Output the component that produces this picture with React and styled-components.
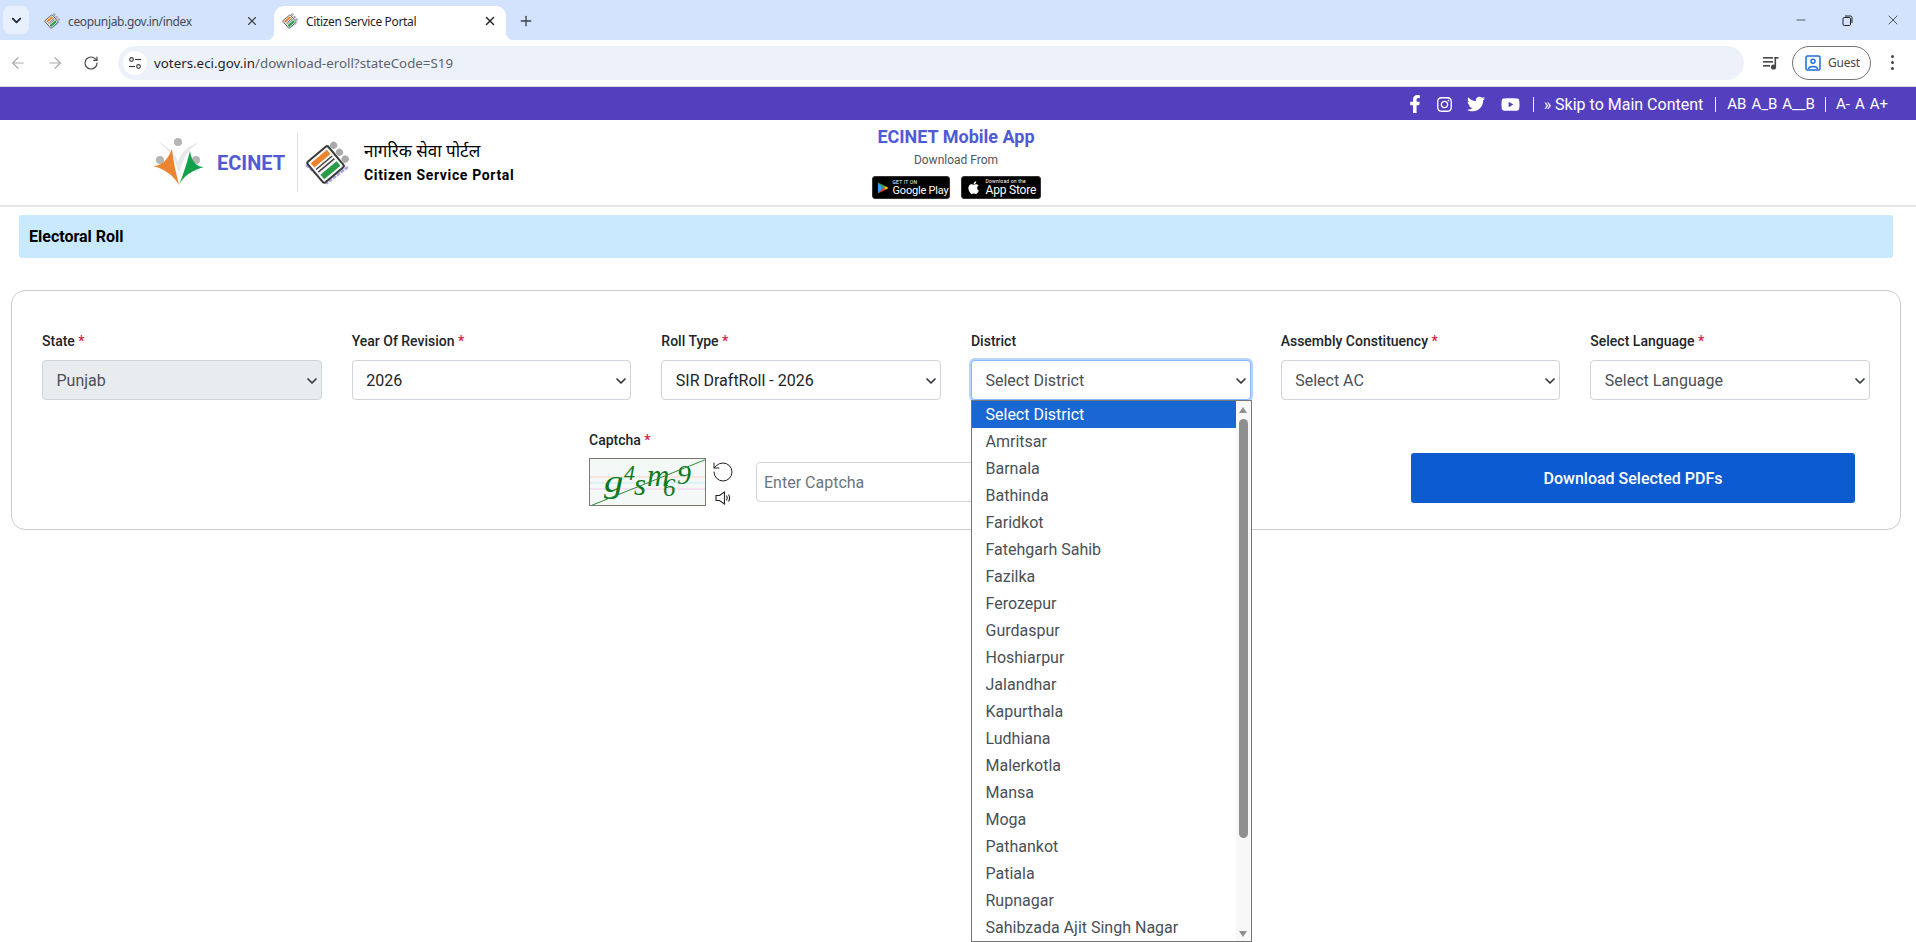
import React from 'react';
import styled, { createGlobalStyle } from 'styled-components';
import { FaFacebookF, FaInstagram, FaTwitter, FaYoutube } from 'react-icons/fa';
import { ArrowLeft, ArrowRight, RotateCw, X, Plus, Minus, ChevronDown, RotateCcw } from 'lucide-react';

const Global = createGlobalStyle`
  html, body { margin: 0; padding: 0; background: #fff; overflow: hidden; }
  body { font-family: Roboto, "Liberation Sans", sans-serif; }
  * { box-sizing: border-box; }
`;

const Page = styled.div`
  width: 1916px; height: 942px; overflow: hidden; display: flex; flex-direction: column; position: relative;
`;

/* browser chrome */
const TabStrip = styled.div`
  height: 40px; background: #d3e3fd; display: flex; align-items: flex-end; padding-left: 3px;
`;
const TabMenu = styled.div`
  width: 26px; height: 28px; margin: 0 0 6px 0; border-radius: 8px; background: #e8f0fe;
  display: flex; align-items: center; justify-content: center; color: #1f2a44;
`;
const Tab = styled.div`
  position: relative;
  width: ${p => p.$active ? '232px' : '241px'}; height: 34px; display: flex; align-items: center; gap: 8px;
  padding: 0 ${p => p.$active ? '9px' : '15px'} 4px ${p => p.$active ? '8px' : '11px'};
  border-radius: 10px 10px 0 0;
  background: ${p => p.$active ? '#fff' : 'transparent'};
  color: ${p => p.$active ? '#1f1f1f' : '#444a55'};
  font: 12px "Noto Sans", sans-serif; letter-spacing: -0.35px;
  margin-left: ${p => p.$active ? '0' : '4px'};
  ${p => p.$active ? `
    &::before, &::after { content: ''; position: absolute; bottom: 0; width: 8px; height: 8px; }
    &::before { left: -8px; background: radial-gradient(circle at 0 0, #d3e3fd 8px, #fff 8.5px); }
    &::after { right: -8px; background: radial-gradient(circle at 100% 0, #d3e3fd 8px, #fff 8.5px); }
  ` : ''}
`;
const TabTitle = styled.span` flex: 1; white-space: nowrap; `;
const NewTab = styled.div`
  width: 34px; height: 34px; display: flex; align-items: center; justify-content: center; color: #3c4043; margin-left: 3px; padding-bottom: 5px;
`;
const Spacer = styled.div` flex: 1; `;
const WindowButtons = styled.div`
  display: flex; align-self: flex-start; height: 40px; color: #1f1f1f;
`;
const WinButton = styled.div`
  width: 46px; height: 40px; display: flex; align-items: center; justify-content: center;
`;
const Toolbar = styled.div`
  height: 47px; background: #fff; display: flex; align-items: center; padding: 0 0 1px 0; border-bottom: 1px solid #d9d9d9;
`;
const NavGroup = styled.div`
  width: 118px; display: flex; align-items: center; padding-left: 9px; gap: 19px; flex: none;
`;
const NavIcon = styled.span`
  display: flex; color: ${p => p.$on ? '#474747' : '#a8abaf'};
`;
const Omnibox = styled.div`
  width: 1626px; height: 34px; border-radius: 17px; background: #edf2fa; display: flex; align-items: center; padding-left: 5px; flex: none;
  font: 13.33px "Noto Sans", sans-serif; color: #5f6368;
`;
const TuneBadge = styled.span`
  width: 24px; height: 24px; border-radius: 50%; background: #fff; display: flex; align-items: center; justify-content: center; margin-right: 7px;
`;
const Host = styled.span` color: #1f1f1f; `;
const ToolRight = styled.div`
  flex: 1; display: flex; align-items: center; padding-left: 19px; color: #474747;
`;
const GuestChip = styled.div`
  margin-left: 13px; width: 79px; height: 34px; border: 1px solid #747775; border-radius: 17px; display: flex; align-items: center; padding-left: 12px; gap: 7px;
  font: 12px "Noto Sans", sans-serif; letter-spacing: -0.2px; color: #474747; flex: none;
`;
const Dots = styled.div`
  margin-left: 20px; display: flex; flex-direction: column; gap: 3px;
  & > i { width: 3px; height: 3px; border-radius: 50%; background: #474747; display: block; }
`;

/* site */
const TopBar = styled.div`
  height: 33px; background: #5440be; color: #fff; display: flex; align-items: center; justify-content: flex-end; padding: 1px 28px 0 0; font-size: 16px;
`;
const Social = styled.a`
  display: flex; margin-right: ${p => p.$gap}px; font-size: ${p => p.$size}px; color: #fff;
`;
const Sep = styled.span`
  width: 1px; height: 15px; background: #f0eefa; margin: 0 ${p => p.$r || 10}px 0 ${p => p.$l || 10}px;
`;
const SizeLinks = styled.span`
  display: flex; gap: 5px; font-size: 15px;
`;
const Header = styled.header`
  height: 87px; border-bottom: 2px solid #e6e6f0; display: flex; background: #fff;
`;
const Brand = styled.div`
  width: 846px; display: flex; align-items: center; padding: 0 0 0 153px; flex: none;
`;
const BrandName = styled.div`
  color: #4f5bd5; font-weight: 700; font-size: 20px; margin-left: 12px; width: 68px;
`;
const Divider = styled.div` width: 1px; height: 58px; background: #ddd; margin: 0 7px 0 12px; `;
const PortalText = styled.div`
  margin-left: 15px; color: #000; display: flex; flex-direction: column; gap: 3px;
`;
const Hindi = styled.div` font-size: 17px; font-weight: 400; line-height: 22px; margin-top: -1px; font-family: "Noto Sans Devanagari", "Lohit Devanagari", Roboto, sans-serif; `;
const English = styled.div` font-size: 14px; font-weight: 700; letter-spacing: 0.65px; line-height: 16px; `;
const AppBlock = styled.div`
  width: 220px; display: flex; flex-direction: column; align-items: center; padding-top: 6px; color: #4f5bd5;
`;
const AppTitle = styled.div` font-weight: 700; font-size: 18px; line-height: 21px; `;
const AppSub = styled.div` font-size: 12px; color: #555; line-height: 16px; margin-top: 5px; `;
const Badges = styled.div` display: flex; gap: 11px; margin-top: 8px; `;
const Badge = styled.div`
  width: ${p => p.$w}px; height: 23px; background: #000; border-radius: 3px; border: 1px solid #333; color: #fff; display: flex; align-items: center; padding-left: ${p => p.$pl}px; gap: ${p => p.$g}px;
`;
const BadgeText = styled.div`
  display: flex; flex-direction: column; line-height: 1;
  small { font-size: 5px; letter-spacing: .2px; }
  b { font-size: ${p => p.$s}px; font-weight: 400; letter-spacing: -0.2px; white-space: nowrap; }
`;

const TitleBar = styled.div`
  margin: 8px 23px 0 19px; height: 43px; background: #c9e9ff; border-radius: 3px; display: flex; align-items: center; padding-left: 10px;
  font-weight: 700; font-size: 16px; color: #000;
`;
const Card = styled.section`
  margin: 32px 15px 0 11px; height: 240px; border: 1px solid #ccc; border-radius: 14px; padding: 40px 30px 0;
`;
const FieldRow = styled.div`
  display: grid; grid-template-columns: repeat(6, 1fr); column-gap: 30px;
`;
const Label = styled.label`
  display: block; font-size: 14px; font-weight: 500; line-height: 20px; color: #212529; height: 29px;
  em { color: #d3213c; font-style: normal; }
`;
const SelectBox = styled.div`
  position: relative; height: 40px; border: 1px solid ${p => p.$focus ? '#86b7fe' : '#ced4da'}; border-radius: 4px;
  background: ${p => p.$disabled ? '#e9ecef' : '#fff'}; color: ${p => p.$dark ? '#212529' : '#495057'};
  font-size: 16px; display: flex; align-items: center; padding-left: 13.5px;
  box-shadow: ${p => p.$focus ? '0 0 0 2px #b6d4fe' : 'none'};
  svg { position: absolute; right: 1px; top: 12px; color: #343a40; }
`;
const CaptchaRow = styled.div`
  display: flex; margin-top: 30px;
`;
const CaptchaBlock = styled.div`
  margin-left: 547px; width: 470px; flex: none;
`;
const CaptchaLine = styled.div` display: flex; align-items: center; margin-top: -1px; `;
const CaptchaImage = styled.div`
  position: relative; width: 117px; height: 48px; border: 1px solid #7a7a72; background: #f4f8f6; overflow: hidden; flex: none;
`;
const CaptchaArt = styled.svg` position: absolute; inset: 0; `;
const Glyph = styled.span`
  position: absolute; left: ${p => p.$x}px; top: ${p => p.$y}px; font: italic ${p => p.$s}px "Liberation Serif", serif; color: #0c7a1e; line-height: 1;
  transform: scaleX(${p => p.$sx || 1}); transform-origin: left center;
`;
const CaptchaTools = styled.div`
  display: flex; flex-direction: column; align-items: center; gap: 7px; margin-left: 5px; width: 24px; color: #222;
`;
const CaptchaInput = styled.div`
  margin-left: 21px; height: 40px; width: 230px; border: 1px solid #ced4da; border-radius: 4px; display: flex; align-items: center; padding-left: 7px; color: #6c757d; font-size: 16px;
`;
const DownloadButton = styled.button`
  margin: 23px 0 0 352px; width: 444px; height: 50px; background: #0d5bd0; color: #fff; border: 0; border-radius: 3px; font: 500 16px Roboto, sans-serif;
`;

const Dropdown = styled.div`
  position: absolute; left: 971px; top: 400px; width: 281px; height: 542px; background: #fff; border: 1px solid #767676;
  display: flex; overflow: hidden;
`;
const OptionList = styled.div` flex: 1; `;
const Option = styled.div`
  height: 27px; padding-left: 13.5px; display: flex; align-items: center; font-size: 16px; white-space: nowrap;
  background: ${p => p.$on ? '#1967d2' : 'transparent'}; color: ${p => p.$on ? '#fff' : '#495057'};
`;
const ScrollTrack = styled.div`
  width: 15px; background: #f8f8f8; position: relative; flex: none;
`;
const ScrollThumb = styled.div`
  position: absolute; left: 3px; right: 3px; top: 18px; height: 419px; background: #8f8f8f; border-radius: 5px;
`;
const Arrow = styled.i`
  position: absolute; left: 3px; width: 0; height: 0; border-left: 4.5px solid transparent; border-right: 4.5px solid transparent;
  ${p => p.$up ? 'top: 6px; border-bottom: 6px solid #8f8f8f;' : 'bottom: 4px; border-top: 6px solid #8f8f8f;'}
`;

const Evm = ({ size = 16 }) => (
  <svg width={size} height={size} viewBox="0 0 44 44">
    <path d="M1 24 L22 42 L43 26" fill="none" stroke="#a5a7e6" strokeWidth="2.5" strokeDasharray="4 1" />
    <g transform="rotate(-40 20 22)">
      <rect x="6" y="10" width="27" height="27" rx="2" fill="#f7f7f7" stroke="#3a3a3a" strokeWidth="2" />
      <rect x="9" y="13" width="21" height="5.5" fill="#ea8430" />
      <rect x="9" y="20.5" width="21" height="1.5" fill="#444" />
      <rect x="9" y="24" width="21" height="1.5" fill="#444" />
      <rect x="9" y="28" width="21" height="6" fill="#2a9b49" />
      <circle cx="38" cy="14" r="3.6" fill="#aaa" />
      <circle cx="38" cy="23" r="3.6" fill="#aaa" />
      <circle cx="38" cy="32" r="3.6" fill="#aaa" />
    </g>
  </svg>
);

const EcinetLogo = () => (
  <svg width="52" height="52" viewBox="0 0 52 52">
    <path d="M5 5 C14 9 22 15 25 25 C27 15 36 9 46 5 C37 11 30 20 27 34 L25 34 C22 20 14 11 5 5 Z" fill="#e8e8e8" />
    <circle cx="25" cy="5" r="4" fill="#b5b5b5" />
    <circle cx="7" cy="23" r="4" fill="#b5b5b5" />
    <circle cx="43" cy="23" r="4" fill="#b5b5b5" />
    <path d="M0 29 C7 29 14 25 19 12 C20 24 23 36 26 48 C21 39 12 32 0 29 Z" fill="#ea8430" />
    <path d="M51 30 C44 30 39 26 37 14 C34 26 30 38 26 48 C31 38 40 33 51 30 Z" fill="#12a04d" />
  </svg>
);

const Tune = () => (
  <svg width="14" height="14" viewBox="0 0 14 14" fill="none" stroke="#3c4043" strokeWidth="1.2">
    <circle cx="3.5" cy="3.5" r="1.8" /><path d="M7 3.5h6" />
    <circle cx="10.5" cy="10.5" r="1.8" /><path d="M1 10.5h6" />
  </svg>
);
const MediaIcon = () => (
  <svg width="16" height="14" viewBox="0 0 16 14" fill="#474747">
    <rect x="0" y="1" width="10" height="1.6" /><rect x="0" y="5" width="10" height="1.6" /><rect x="0" y="9" width="7" height="1.6" />
    <rect x="11.5" y="1" width="1.6" height="10" /><rect x="11.5" y="1" width="4" height="1.6" />
    <circle cx="10.5" cy="11" r="2.6" />
  </svg>
);
const GuestIcon = () => (
  <svg width="16" height="16" viewBox="0 0 16 16" fill="none" stroke="#1a6fd8" strokeWidth="1.5">
    <rect x="1" y="1" width="14" height="14" rx="1.5" />
    <circle cx="8" cy="6.2" r="2" />
    <path d="M3.5 14 C4 10.8 12 10.8 12.5 14" />
  </svg>
);
const RestoreIcon = () => (
  <svg width="11" height="11" viewBox="0 0 11 11" fill="none" stroke="#1f1f1f" strokeWidth="1">
    <rect x="1" y="2.5" width="7.5" height="8" rx="1.2" />
    <path d="M3 1h5.5A1.5 1.5 0 0 1 10 2.5V8" />
  </svg>
);
const SpeakerIcon = () => (
  <svg width="16" height="14" viewBox="0 0 16 14" fill="none" stroke="#222" strokeWidth="1.1">
    <path d="M1 4.5h3.500L9.500 1v12L4.500 9.500H1z" />
    <path d="M11.500 4.500c1 1.500 1 3.500 0 5" />
    <path d="M13.500 3.500c1.300 2 1.300 5 0 7" />
  </svg>
);
const PlayLogo = () => (
  <svg width="13" height="14" viewBox="0 0 13 14">
    <path d="M1 1 L7 7 L1 13 Z" fill="#3b9cf2" />
    <path d="M1 1 L9.5 5 L7 7 Z" fill="#34a853" />
    <path d="M1 13 L9.5 9 L7 7 Z" fill="#ea4335" />
    <path d="M9.5 5 L12.5 7 L9.5 9 L7 7 Z" fill="#fbbc04" />
  </svg>
);
const AppleLogo = () => (
  <svg width="13" height="15" viewBox="0 0 24 28" fill="#fff">
    <path d="M17 14.800c0-3 2.500-4.400 2.600-4.500-1.400-2.100-3.600-2.400-4.400-2.400-1.900-.2-3.700 1.100-4.600 1.100-1 0-2.500-1.100-4-1C4.500 8 2.600 9.100 1.600 11c-2.100 3.600-.5 9 1.500 12 1 1.400 2.200 3.100 3.800 3 1.500-.1 2.100-1 3.900-1 1.800 0 2.400 1 4 .9 1.700 0 2.700-1.500 3.700-2.900 1.200-1.700 1.600-3.300 1.700-3.400-.1 0-3.200-1.200-3.200-4.800zM14 6c.8-1 1.400-2.400 1.200-3.800-1.200.1-2.700.8-3.500 1.800-.8.900-1.500 2.300-1.300 3.700 1.400.1 2.700-.7 3.600-1.700z" />
  </svg>
);

const fields = [
  { label: 'State', req: true, value: 'Punjab', disabled: true },
  { label: 'Year Of Revision', req: true, value: '2026', dark: true },
  { label: 'Roll Type', req: true, value: 'SIR DraftRoll - 2026', dark: true },
  { label: 'District', value: 'Select District', focus: true },
  { label: 'Assembly Constituency', req: true, value: 'Select AC' },
  { label: 'Select Language', req: true, value: 'Select Language' },
];
const districts = ['Select District', 'Amritsar', 'Barnala', 'Bathinda', 'Faridkot', 'Fatehgarh Sahib', 'Fazilka', 'Ferozepur', 'Gurdaspur', 'Hoshiarpur', 'Jalandhar', 'Kapurthala', 'Ludhiana', 'Malerkotla', 'Mansa', 'Moga', 'Pathankot', 'Patiala', 'Rupnagar', 'Sahibzada Ajit Singh Nagar'];

export default function App() {
  return (
    <Page>
      <Global />
      <TabStrip>
        <TabMenu><ChevronDown size={15} strokeWidth={3} /></TabMenu>
        <Tab>
          <Evm />
          <TabTitle>ceopunjab.gov.in/index</TabTitle>
          <X size={14} color="#444" />
        </Tab>
        <Tab $active>
          <Evm />
          <TabTitle>Citizen Service Portal</TabTitle>
          <X size={14} color="#222" strokeWidth={2.4} />
        </Tab>
        <NewTab><Plus size={16} /></NewTab>
        <Spacer />
        <WindowButtons>
          <WinButton><Minus size={14} strokeWidth={1.2} /></WinButton>
          <WinButton><RestoreIcon /></WinButton>
          <WinButton><X size={16} strokeWidth={1.1} /></WinButton>
        </WindowButtons>
      </TabStrip>
      <Toolbar>
        <NavGroup>
          <NavIcon><ArrowLeft size={18} strokeWidth={1.6} /></NavIcon>
          <NavIcon><ArrowRight size={18} strokeWidth={1.6} /></NavIcon>
          <NavIcon $on><RotateCw size={16} strokeWidth={1.8} /></NavIcon>
        </NavGroup>
        <Omnibox>
          <TuneBadge><Tune /></TuneBadge>
          <span><Host>voters.eci.gov.in</Host>/download-eroll?stateCode=S19</span>
        </Omnibox>
        <ToolRight>
          <MediaIcon />
          <GuestChip><GuestIcon />Guest</GuestChip>
          <Dots><i /><i /><i /></Dots>
        </ToolRight>
      </Toolbar>

      <TopBar>
        <Social $gap={12} $size={18}><FaFacebookF /></Social>
        <Social $gap={14} $size={17}><FaInstagram /></Social>
        <Social $gap={16} $size={18}><FaTwitter /></Social>
        <Social $gap={0} $size={19}><FaYoutube /></Social>
        <Sep $l={13} $r={10} />
        <span>» Skip to Main Content</span>
        <Sep $l={12} $r={11} />
        <SizeLinks><span>AB</span><span>A_B</span><span>A__B</span></SizeLinks>
        <Sep $l={10} $r={10} />
        <SizeLinks><span>A-</span><span>A</span><span>A+</span></SizeLinks>
      </TopBar>

      <Header>
        <Brand>
          <EcinetLogo />
          <BrandName>ECINET</BrandName>
          <Divider />
          <Evm size={44} />
          <PortalText>
            <Hindi>नागरिक सेवा पोर्टल</Hindi>
            <English>Citizen Service Portal</English>
          </PortalText>
        </Brand>
        <AppBlock>
          <AppTitle>ECINET Mobile App</AppTitle>
          <AppSub>Download From</AppSub>
          <Badges>
            <Badge $w={78} $pl={4} $g={4}>
              <PlayLogo />
              <BadgeText $s={11}><small>GET IT ON</small><b>Google Play</b></BadgeText>
            </Badge>
            <Badge $w={80} $pl={6} $g={5}>
              <AppleLogo />
              <BadgeText $s={12}><small>Download on the</small><b>App Store</b></BadgeText>
            </Badge>
          </Badges>
        </AppBlock>
      </Header>

      <TitleBar>Electoral Roll</TitleBar>

      <Card>
        <FieldRow>
          {fields.map(f => (
            <div key={f.label}>
              <Label>{f.label}{f.req && <em> *</em>}</Label>
              <SelectBox $disabled={f.disabled} $focus={f.focus} $dark={f.dark}>
                {f.value}
                <ChevronDown size={16} strokeWidth={2.6} />
              </SelectBox>
            </div>
          ))}
        </FieldRow>
        <CaptchaRow>
          <CaptchaBlock>
            <Label>Captcha <em>*</em></Label>
            <CaptchaLine>
              <CaptchaImage>
                <CaptchaArt width="117" height="48" viewBox="0 0 117 48">
                  <line x1="0" y1="18" x2="117" y2="18" stroke="#f8d5cf" />
                  <line x1="0" y1="24" x2="117" y2="24" stroke="#bfeef5" />
                  <line x1="0" y1="30" x2="117" y2="30" stroke="#f8c8f0" />
                </CaptchaArt>
                <Glyph $x={14} $y={7} $s={31} $sx={1.25}>g</Glyph>
                <Glyph $x={34} $y={3} $s={22}>4</Glyph>
                <Glyph $x={44} $y={10} $s={31}>s</Glyph>
                <Glyph $x={57} $y={1} $s={31}>m</Glyph>
                <Glyph $x={73} $y={16} $s={25}>6</Glyph>
                <Glyph $x={87} $y={2} $s={28}>9</Glyph>
                <CaptchaArt width="117" height="48" viewBox="0 0 117 48">
                  <line x1="0" y1="47" x2="117" y2="0" stroke="#2e8b3c" />
                </CaptchaArt>
              </CaptchaImage>
              <CaptchaTools>
                <RotateCcw size={24} strokeWidth={1} />
                <SpeakerIcon />
              </CaptchaTools>
              <CaptchaInput>Enter Captcha</CaptchaInput>
            </CaptchaLine>
          </CaptchaBlock>
          <DownloadButton>Download Selected PDFs</DownloadButton>
        </CaptchaRow>
      </Card>

      <Dropdown>
        <OptionList>
          {districts.map((d, i) => <Option key={d} $on={i === 0}>{d}</Option>)}
        </OptionList>
        <ScrollTrack>
          <Arrow $up />
          <ScrollThumb />
          <Arrow />
        </ScrollTrack>
      </Dropdown>
    </Page>
  );
}
